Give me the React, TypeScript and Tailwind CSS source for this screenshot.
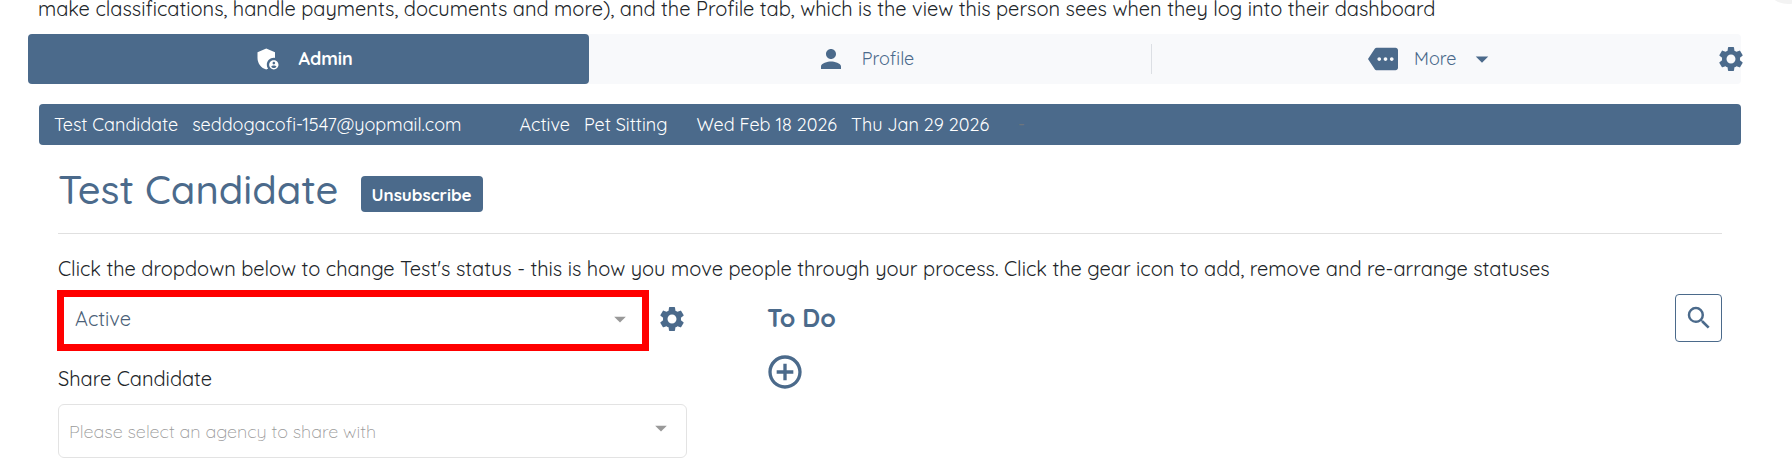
import { useState } from "react";
import {
  MdAddCircleOutline,
  MdAdminPanelSettings,
  MdArrowDropDown,
  MdMore,
  MdPerson,
  MdSearch,
  MdSettings,
} from "react-icons/md";

const statuses = ["Active", "Pending", "Archived"];
const agencies = ["Pet Sitting", "Dog Walking"];

function Tabs() {
  return (
    <nav className="ml-7 mr-[51px] flex h-[50px] items-center rounded bg-[#f8f9fb] text-lg text-[#4b6a8b]">
      <button className="flex h-full flex-1 items-center justify-center gap-4 rounded bg-[#4b6a8b] font-bold text-white">
        <MdAdminPanelSettings size={28} />
        <span className="mr-2.5">Admin</span>
      </button>
      <button className="flex h-full flex-1 items-center justify-center gap-4">
        <MdPerson size={30} />
        <span className="mr-2.5">Profile</span>
      </button>
      <div className="h-[30px] w-px bg-[#dcdfe4]" />
      <button className="flex h-full flex-1 items-center justify-center gap-4">
        <MdMore size={30} />
        More
        <MdArrowDropDown size={30} className="-ml-1.5" />
      </button>
      <button aria-label="Settings" className="-mr-2 flex w-9 justify-center">
        <MdSettings size={30} />
      </button>
    </nav>
  );
}

function CandidateBar() {
  return (
    <div className="ml-[39px] mr-[51px] mt-5 flex h-[41px] items-center rounded bg-[#4b6a8b] px-[15px] text-lg whitespace-nowrap text-white">
      <span className="mr-3.5">Test Candidate</span>
      <span className="mr-[58px]">seddogacofi-1547@yopmail.com</span>
      <span className="mr-3.5">Active</span>
      <span className="mr-[29px]">Pet Sitting</span>
      <span className="mr-3.5">Wed Feb 18 2026</span>
      <span className="mr-[29px]">Thu Jan 29 2026</span>
      <span className="text-[#6c757d]">-</span>
    </div>
  );
}

export default function App() {
  const [status, setStatus] = useState("Active");
  const [agency, setAgency] = useState("");

  return (
    <div className="relative overflow-hidden bg-white font-[Quicksand,Lato,sans-serif] text-[#212529]">
      {/* floating bubble in the corner */}
      <div className="absolute -top-11 -right-5 size-12 rounded-full bg-[#f3f3f3]" />

      <p className="mb-4 pl-[38px] text-xl leading-[18px] whitespace-nowrap">
        make classifications, handle payments, documents and more), and the Profile tab, which is the view this
        person sees when they log into their dashboard
      </p>

      <Tabs />
      <CandidateBar />

      <main className="ml-[58px] mr-[70px]">
        <div className="flex items-end gap-[22px] border-b border-[#e0e0e0] pt-[21px] pb-[21px]">
          <h1 className="text-[40px] leading-[46px] font-medium text-[#4b6a8b]">Test Candidate</h1>
          <button className="h-9 rounded bg-[#4b6a8b] px-[11px] pt-0.5 text-[17px] font-bold text-white">
            Unsubscribe
          </button>
        </div>

        <p className="mt-5 text-xl leading-[30px] whitespace-nowrap">
          Click the dropdown below to change Test's status - this is how you move people through your process. Click
          the gear icon to add, remove and re-arrange statuses
        </p>

        <div className="mt-[6px] flex gap-20">
          <section className="w-[37.8%]">
            <div className="flex items-center gap-2">
              <div className="relative -ml-px flex-1 border-[7px] border-[#ff0000]">
                <select
                  aria-label="Status"
                  value={status}
                  onChange={(e) => setStatus(e.target.value)}
                  className="block h-[47px] w-full appearance-none bg-white px-[11px] pb-1 text-xl text-[#4b5f78]"
                >
                  {statuses.map((s) => (
                    <option key={s}>{s}</option>
                  ))}
                </select>
                <MdArrowDropDown size={28} className="pointer-events-none absolute top-2 right-2 text-[#999]" />
              </div>
              <button aria-label="Edit statuses" className="pb-1 text-[#4b6a8b]">
                <MdSettings size={30} />
              </button>
            </div>

            <label htmlFor="agency" className="mt-[13px] block text-xl leading-[30px]">
              Share Candidate
            </label>
            <div className="relative mt-[10px]">
              <select
                id="agency"
                value={agency}
                onChange={(e) => setAgency(e.target.value)}
                className="block h-[54px] w-full appearance-none rounded-md border border-[#e3e3e3] bg-white px-2.5 pt-0.5 text-lg font-light text-[#999]"
              >
                <option value="">Please select an agency to share with</option>
                {agencies.map((a) => (
                  <option key={a}>{a}</option>
                ))}
              </select>
              <MdArrowDropDown size={28} className="pointer-events-none absolute top-2.5 right-3 text-[#999]" />
            </div>
          </section>

          <section className="flex flex-1 items-start justify-between pt-1 text-[#4b6a8b]">
            <div>
              <h2 className="text-[25px] leading-[48px] font-bold">To Do</h2>
              <button aria-label="Add to do" className="mt-2.5 -ml-0.5 block">
                <MdAddCircleOutline size={40} />
              </button>
            </div>
            <button
              aria-label="Search"
              className="flex h-12 w-[47px] items-center justify-center rounded border border-[#4b6a8b]"
            >
              <MdSearch size={30} />
            </button>
          </section>
        </div>
      </main>
    </div>
  );
}
